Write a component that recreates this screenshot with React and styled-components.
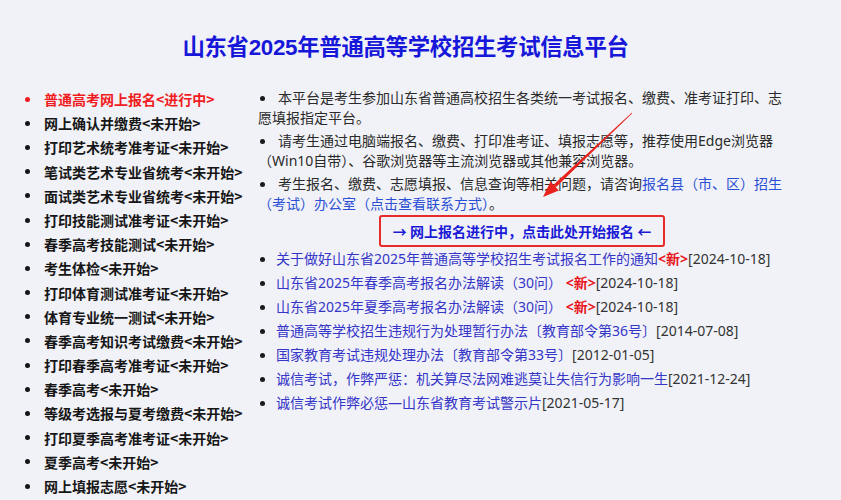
import React from "react";
import styled, { createGlobalStyle } from "styled-components";

const GlobalStyle = createGlobalStyle`
  html, body {
    margin: 0;
    padding: 0;
    background: #f1f2f7;
  }
  body {
    font-family: "Noto Sans", "Noto Sans CJK SC", sans-serif;
    color: #222;
  }
`;

const Page = styled.div`
  position: relative;
  width: 841px;
  height: 500px;
  overflow: hidden;
`;

const Title = styled.h1`
  margin: 32px 0 0;
  height: 32px;
  line-height: 32px;
  text-align: center;
  font-family: "Liberation Sans", "Noto Sans CJK SC", sans-serif;
  font-size: 22.4px;
  font-weight: 700;
  color: #1717d9;
  letter-spacing: -0.3px;
  padding-right: 30px;
`;

const Main = styled.div`
  display: flex;
  align-items: flex-start;
`;

const SideList = styled.ul`
  list-style: none;
  margin: 23px 0 0;
  padding: 0 0 0 25px;
  width: 233px;
  flex-shrink: 0;
`;

const SideItem = styled.li`
  display: flex;
  align-items: center;
  height: 24.2px;
  line-height: 24.2px;
  font-family: "Noto Sans CJK SC", sans-serif;
  font-size: 14px;
  font-weight: 700;
  white-space: nowrap;
  color: ${(p) => (p.$active ? "#f01c22" : "#161616")};

  &::before {
    content: "";
    width: 5px;
    height: 5px;
    border-radius: 50%;
    margin-right: 14px;
    flex-shrink: 0;
    background: ${(p) => (p.$active ? "#f01c22" : "#161616")};
  }
`;

const Content = styled.div`
  width: 528px;
  margin-top: 24px;
  font-size: 14px;
  color: #2a2a2a;
`;

const Para = styled.p`
  margin: 0 0 3px;
  line-height: 20px;

  &::before {
    content: "";
    display: inline-block;
    width: 5px;
    height: 5px;
    border-radius: 50%;
    background: #1a1a1a;
    margin: 0 13px 2px 2px;
    vertical-align: middle;
  }
`;

const InfoLink = styled.a`
  color: #2a4fd4;
  text-decoration: none;
`;

const CallBox = styled.a`
  display: flex;
  align-items: center;
  justify-content: center;
  width: 286px;
  height: 32px;
  box-sizing: border-box;
  margin: -2px auto 0;
  border: 2px solid #e82a2a;
  border-radius: 3px;
  font-family: "Noto Sans CJK SC", sans-serif;
  font-size: 14px;
  font-weight: 700;
  color: #1a1ad6;
  text-decoration: none;
  white-space: nowrap;
`;

const NewsList = styled.ul`
  list-style: none;
  margin: 0;
  padding: 0;
`;

const NewsItem = styled.li`
  display: flex;
  align-items: center;
  height: 24px;
  line-height: 24px;
  white-space: nowrap;
  color: #333;

  &::before {
    content: "";
    width: 5px;
    height: 5px;
    border-radius: 50%;
    margin: 0 11px 0 2px;
    flex-shrink: 0;
    background: #1a1a1a;
  }
`;

const NewsLink = styled.a`
  color: #3535c8;
  text-decoration: none;
`;

const NewTag = styled.span`
  color: #e8161c;
  font-weight: 700;
`;

const Pointer = styled.svg`
  position: absolute;
  left: 0;
  top: 0;
  pointer-events: none;
`;

const sideItems = [
  ["普通高考网上报名", "<进行中>", true],
  ["网上确认并缴费", "<未开始>"],
  ["打印艺术统考准考证", "<未开始>"],
  ["笔试类艺术专业省统考", "<未开始>"],
  ["面试类艺术专业省统考", "<未开始>"],
  ["打印技能测试准考证", "<未开始>"],
  ["春季高考技能测试", "<未开始>"],
  ["考生体检", "<未开始>"],
  ["打印体育测试准考证", "<未开始>"],
  ["体育专业统一测试", "<未开始>"],
  ["春季高考知识考试缴费", "<未开始>"],
  ["打印春季高考准考证", "<未开始>"],
  ["春季高考", "<未开始>"],
  ["等级考选报与夏考缴费", "<未开始>"],
  ["打印夏季高考准考证", "<未开始>"],
  ["夏季高考", "<未开始>"],
  ["网上填报志愿", "<未开始>"],
];

const news = [
  { title: "关于做好山东省2025年普通高等学校招生考试报名工作的通知", isNew: true, date: "2024-10-18" },
  { title: "山东省2025年春季高考报名办法解读（30问）", isNew: true, gap: true, date: "2024-10-18" },
  { title: "山东省2025年夏季高考报名办法解读（30问）", isNew: true, gap: true, date: "2024-10-18" },
  { title: "普通高等学校招生违规行为处理暂行办法〔教育部令第36号〕", date: "2014-07-08" },
  { title: "国家教育考试违规处理办法〔教育部令第33号〕", date: "2012-01-05" },
  { title: "诚信考试，作弊严惩：机关算尽法网难逃莫让失信行为影响一生", date: "2021-12-24" },
  { title: "诚信考试作弊必惩—山东省教育考试警示片", date: "2021-05-17" },
];

function App() {
  return (
    <Page>
      <GlobalStyle />
      <Title>山东省2025年普通高等学校招生考试信息平台</Title>
      <Main>
        <SideList>
          {sideItems.map(([name, state, active]) => (
            <SideItem key={name} $active={active}>
              {name}
              {state}
            </SideItem>
          ))}
        </SideList>
        <Content>
          <Para>本平台是考生参加山东省普通高校招生各类统一考试报名、缴费、准考证打印、志愿填报指定平台。</Para>
          <Para>请考生通过电脑端报名、缴费、打印准考证、填报志愿等，推荐使用Edge浏览器（Win10自带）、谷歌浏览器等主流浏览器或其他兼容浏览器。</Para>
          <Para>
            考生报名、缴费、志愿填报、信息查询等相关问题，请咨询
            <InfoLink href="#">报名县（市、区）招生（考试）办公室（点击查看联系方式）</InfoLink>。
          </Para>
          <CallBox href="#">→ 网上报名进行中，点击此处开始报名 ←</CallBox>
          <NewsList>
            {news.map((n) => (
              <NewsItem key={n.title}>
                <NewsLink href="#">{n.title}</NewsLink>
                {n.isNew && <NewTag>{n.gap ? "\u00a0" : ""}&lt;新&gt;</NewTag>}
                <span>[{n.date}]</span>
              </NewsItem>
            ))}
          </NewsList>
        </Content>
      </Main>
      <Pointer width="841" height="500" viewBox="0 0 841 500">
        <polygon points="632.3,113.3 631.7,112.7 553.5,184.7 555.9,187.3" fill="#e8231e" />
        <polygon points="543,197 550.6,181.6 558.8,190.4" fill="#e8231e" />
      </Pointer>
    </Page>
  );
}

export default App;
